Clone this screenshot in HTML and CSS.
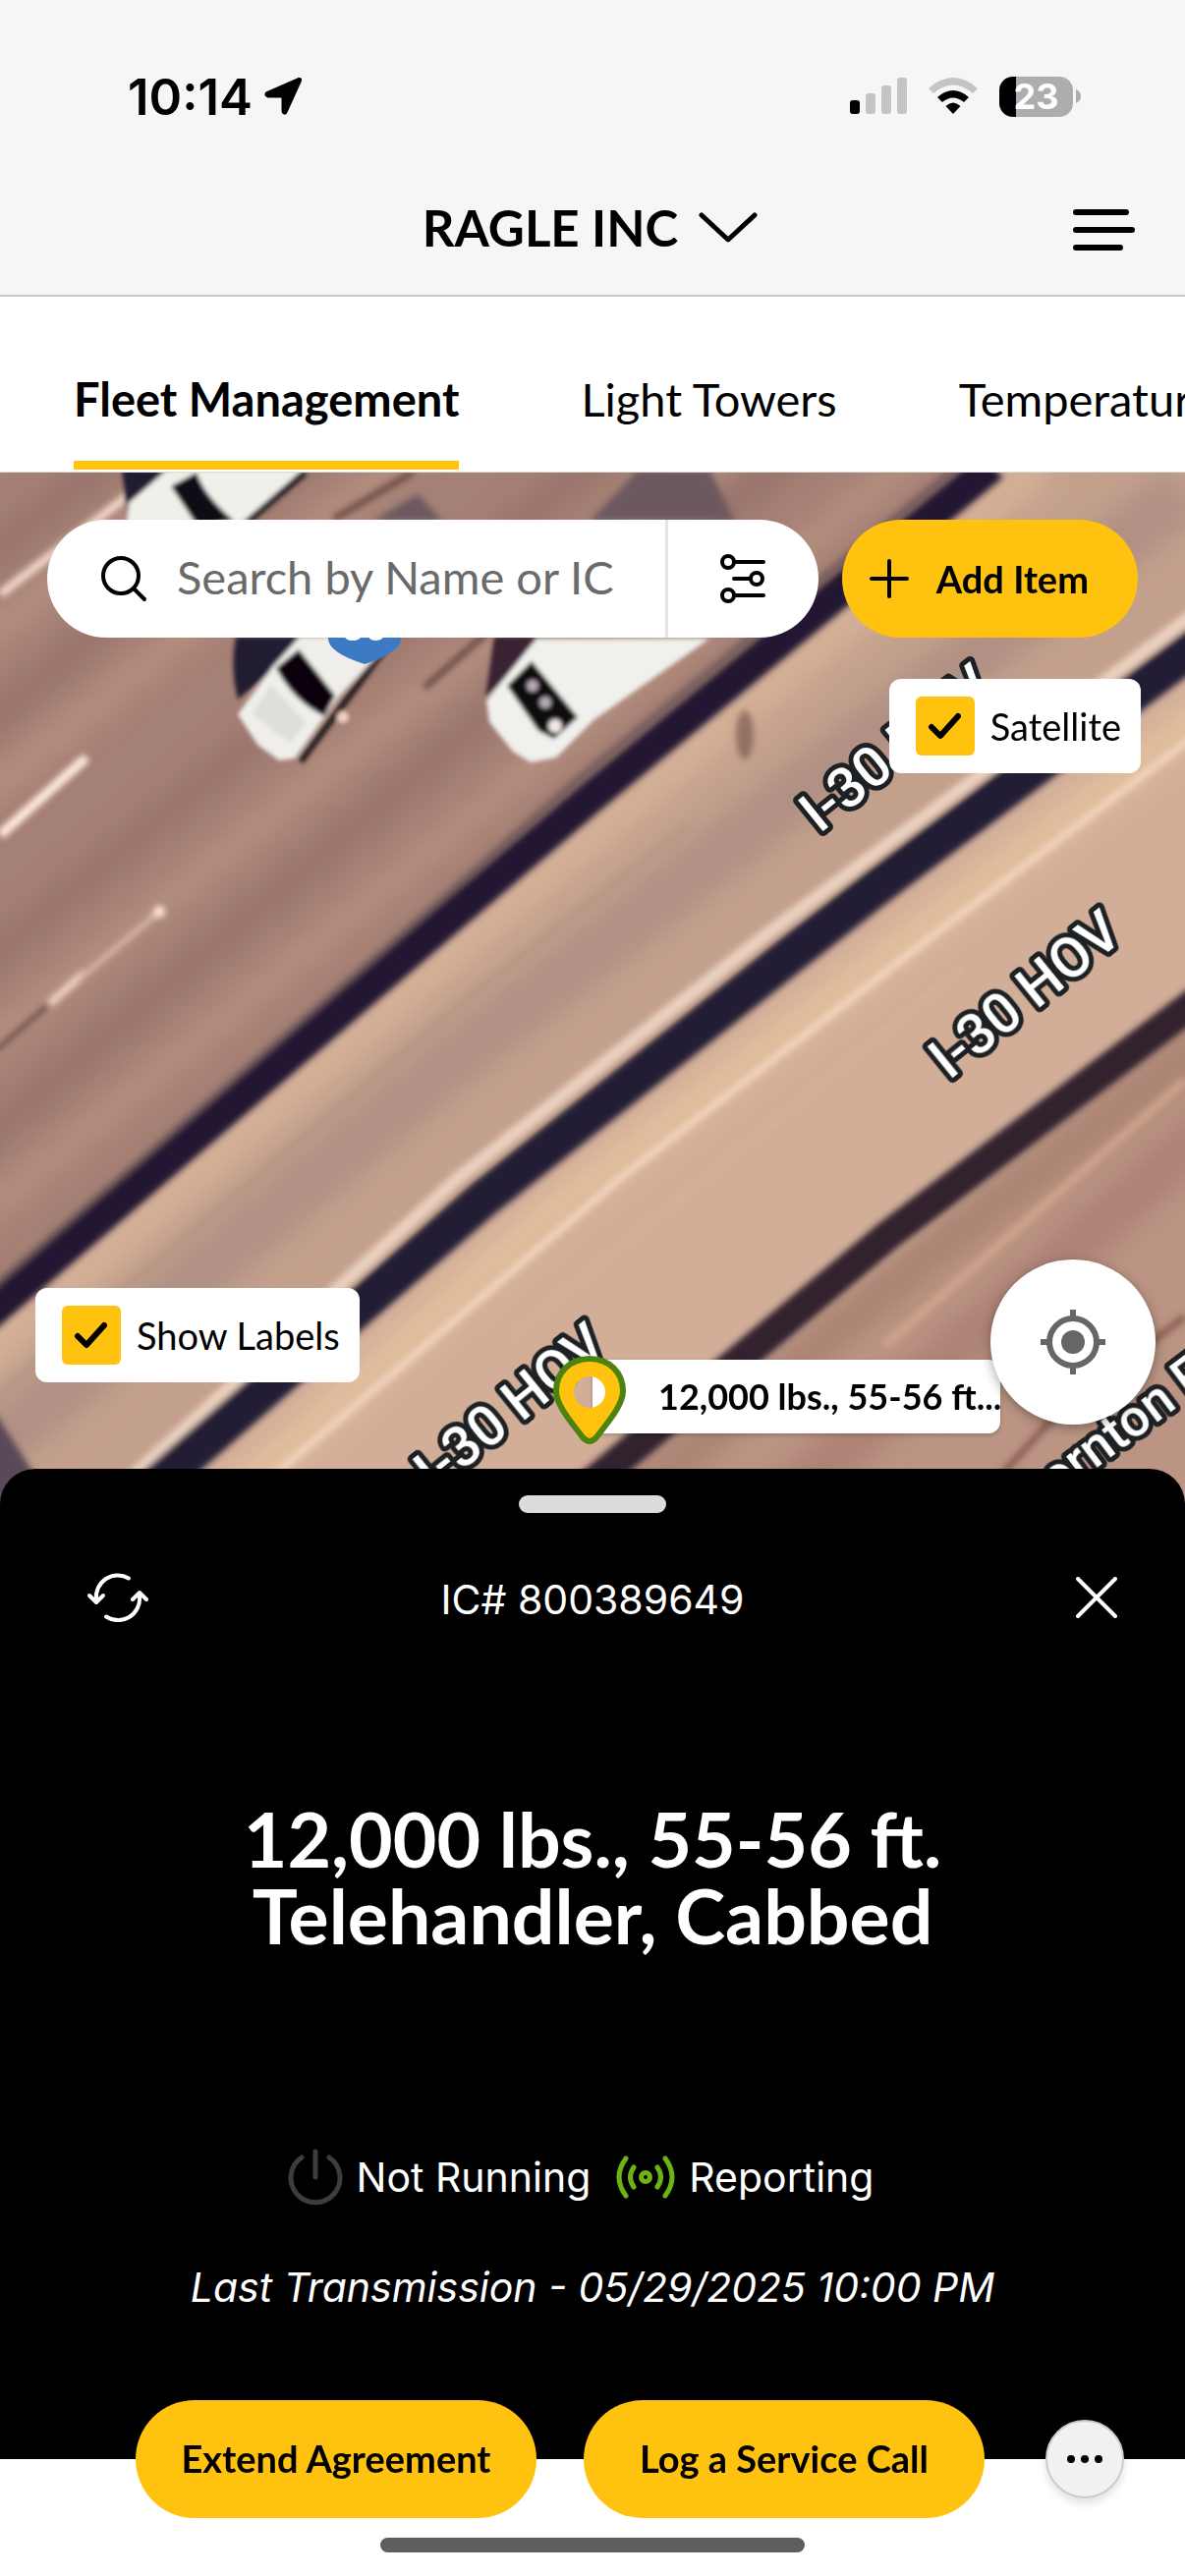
FILE: index.html
```html
<!DOCTYPE html>
<html lang="en">
<head>
<meta charset="utf-8">
<meta name="viewport" content="width=device-width, initial-scale=1">
<title>Fleet Management</title>
<link rel="stylesheet" href="styles.css">
</head>
<body>
<header class="header">
  <div class="status-bar">
    <div class="clock">
      <span>10:14</span>
      <svg width="38" height="38" viewBox="0 0 38 38" aria-hidden="true"><path d="M35 2L3 16Q1.500 18 4 18.500H17Q19.500 18.500 19.500 21V34Q20 36.500 21.500 35L36 3Q36.500 1.500 35 2Z" stroke="#000" stroke-width="4" stroke-linejoin="round"/></svg>
    </div>
    <div class="signals">
      <svg width="58" height="38" viewBox="0 0 58 38" aria-hidden="true"><rect y="23" width="10" height="14" rx="3"/><g fill="#c4c4c4"><rect x="16" y="16" width="10" height="21" rx="3"/><rect x="32" y="8" width="10" height="29" rx="3"/><rect x="48" width="10" height="37" rx="3"/></g></svg>
      <svg width="50" height="38" viewBox="0 0 50 38" aria-hidden="true"><path d="M0 11Q25-11 50 11L45 16Q25-1 5 16Z" fill="#c4c4c4"/><path d="M9 20Q25 6 41 20L36 25Q25 16 14 25Z"/><path d="M17.500 29Q25 22 32.500 29L26 36Q25 37.500 24 36Z"/></svg>
      <div class="battery"><span>23</span><svg width="5" height="14" viewBox="0 0 5 14" aria-hidden="true"><path d="M0 0Q5 2 5 7T0 14Z" fill="#adadad"/></svg></div>
    </div>
  </div>
  <div class="title-row">
    <button class="account" type="button">
      <span>RAGLE INC</span>
      <svg width="62" height="34" viewBox="0 0 62 34" fill="none" stroke="#000" stroke-width="5" stroke-linecap="round" stroke-linejoin="round" aria-hidden="true"><path d="M4 4L31 29L58 4"/></svg>
    </button>
    <button class="menu" type="button" aria-label="Menu">
      <svg width="64" height="42" viewBox="0 0 64 42" stroke="#000" stroke-width="6" stroke-linecap="round" aria-hidden="true"><path d="M3 3H54M3 21H60M3 39H48"/></svg>
    </button>
  </div>
</header>

<nav class="tabs">
  <a class="tab tab-active" href="#fleet">Fleet Management</a>
  <a class="tab" href="#light">Light Towers</a>
  <a class="tab" href="#temperature">Temperature</a>
</nav>

<main class="map">
  <svg class="imagery" viewBox="0 481 1206 1050" preserveAspectRatio="xMidYMin slice" aria-hidden="true">
    <defs>
      <filter id="soft" x="-5%" y="-5%" width="110%" height="110%"><feGaussianBlur stdDeviation="3"/></filter>
      <filter id="slight" x="-5%" y="-5%" width="110%" height="110%"><feGaussianBlur stdDeviation="2"/></filter>
      <filter id="haze" x="-10%" y="-10%" width="120%" height="120%"><feGaussianBlur stdDeviation="14"/></filter>
    </defs>
    <rect y="481" width="1206" height="1050" fill="#a58074"/>
    <!-- road surfaces between the barriers -->
    <g filter="url(#soft)">
      <path d="M-40 1350L1020 460H1260V625L-40 1690Z" fill="#c4a18d"/>
      <path d="M110 1560L1260 630V1000L560 1560Z" fill="#d2ae99"/>
      <path d="M560 1560L1260 1000V1560Z" fill="#bb9483"/>
    </g>
    <g filter="url(#haze)" fill="none">
      <g stroke="#8f6b66" stroke-width="30" opacity=".6">
        <path d="M-40 590L120 460"/><path d="M-40 760L340 440"/><path d="M-40 1000L640 440"/><path d="M-40 1180L470 750L830 440"/>
      </g>
      <g stroke="#c29f8a" stroke-width="22" opacity=".7">
        <path d="M-40 830L430 450"/><path d="M-40 1085L760 440"/><path d="M-40 670L250 440"/><path d="M-40 1255L960 440"/>
      </g>
      <path d="M-40 1500L460 1080L1206 500" stroke="#a98b80" stroke-width="60" opacity=".75"/>
      <path d="M-40 1400L500 935L1060 470" stroke="#dbb79b" stroke-width="34" opacity=".8"/>
      <path d="M230 1530L560 1235L1240 715" stroke="#e4c29d" stroke-width="30"/>
      <path d="M650 1520L930 1290L1240 1050" stroke="#a98272" stroke-width="36"/>
      <path d="M760 1560L1240 1140" stroke="#a67b70" stroke-width="50" opacity=".7"/>
    </g>
    <g filter="url(#soft)" fill="none">
      <path d="M-20 1435L470 1020L700 840" stroke="#a98a7c" stroke-width="4" opacity=".6"/>
      <path d="M520 1360L980 985" stroke="#e0bda6" stroke-width="6" opacity=".3"/>
      <path d="M900 1370L1206 1100" stroke="#d9ab92" stroke-width="9" opacity=".7"/>
      <path d="M1020 1500L1075 1440L1206 1340" stroke="#7d5147" stroke-width="7" opacity=".8"/>
      <path d="M-20 1345L408 977L600 813L1010 474" stroke="#211733" stroke-width="32"/>
      <path d="M-20 1322L390 968L584 797L985 466" stroke="#5d4a52" stroke-width="7" opacity=".7"/>
      <path d="M105 1530L465 1200L780 951L870 884L1230 614" stroke="#ead0bf" stroke-width="13"/>
      <path d="M137 1530L492 1220L808 969L892 903L1230 648" stroke="#231b35" stroke-width="38"/>
      <path d="M590 1520L903 1258L1230 1010" stroke="#33242f" stroke-width="31"/>
      <path d="M240 1535L630 1200L926 970L1230 738" stroke="#f2d3bd" stroke-width="8"/>
      <path d="M0 605L140 497" stroke="#f0d6c8" stroke-width="9"/>
      <path d="M0 850L88 771" stroke="#ffe9dc" stroke-width="10"/>
      <path d="M50 1022L86 990" stroke="#f0d0c0" stroke-width="8"/><path d="M80 997L162 928" stroke="#dfbaa8" stroke-width="5"/><circle cx="162" cy="928" r="6" fill="#ffe9dc"/>
      <path d="M-5 1070L50 1022" stroke="#61423d" stroke-width="4"/>
      <path d="M340 528L420 481M432 700L500 640" stroke="#6f4d44" stroke-width="7"/>
      <path d="M-10 1430L60 1540H-10Z" fill="#5a4a58"/>
      <path d="M380 530L425 503L450 530ZM600 530L650 478H722L748 530Z" fill="#6d5860"/>
      <ellipse cx="758" cy="748" rx="9" ry="25" fill="#866357" opacity=".8"/>
    </g>
    <!-- vehicles -->
    <g filter="url(#slight)">
      <path d="M124 478H172L130 525Z" fill="#221d33"/>
      <path d="M310 481L250 532" stroke="#2a2728" stroke-width="8"/>
      <path d="M129 532L131 512L170 478H308L246 532Z" fill="#f0efea"/>
      <path d="M174 495L200 481Q208 505 238 530L200 534Z" fill="#0b0a14"/>
      <path d="M240 648H305L280 680L242 712Q234 680 240 648Z" fill="#211d32"/>
      <path d="M403 645L306 775" stroke="#2b2220" stroke-width="7"/>
      <path d="M242 727L278 678L305 648H402L346 708L300 772L284 774L262 758Z" fill="#efeeea"/>
      <path d="M256 727L276 697L312 736L295 756Z" fill="#dedfdb"/>
      <path d="M281 680L304 661L341 708L330 729Q298 713 281 680Z" fill="#07060f"/>
      <circle cx="349" cy="730" r="6" fill="#f2d1c6"/>
      <path d="M503 648H560L494 710Z" fill="#3b2433"/>
      <path d="M495 713L546 650H722L604 733L566 771L540 776L522 765L498 735Z" fill="#f0f0ec"/>
      <path d="M516 698L541 673L588 730L564 752L548 744Z" fill="#09080c"/>
      <circle cx="542" cy="698" r="6" fill="#b6a9b4"/><circle cx="555" cy="715" r="6" fill="#b6a9b4"/><circle cx="565" cy="739" r="7" fill="#f1e6e8"/>
    </g>
    <path d="M334 600H408V650Q408 664 371 676Q334 664 334 650Z" fill="#3d7ac6"/>
    <text class="shield-text" x="371" y="652" text-anchor="middle">30</text>
    <g class="road-labels">
      <text transform="translate(834 849) rotate(-39)">I-30 HOV</text>
      <text transform="translate(966 1100) rotate(-39)">I-30 HOV</text>
      <text transform="translate(442 1520) rotate(-39)">I-30 HOV</text>
      <text class="road-name" transform="translate(1026 1562) rotate(-37)">Thornton Fwy</text>
    </g>
  </svg>

  <div class="toolbar">
    <div class="search">
      <label class="search-field">
        <svg width="48" height="50" viewBox="0 0 48 50" fill="none" stroke="#000" stroke-width="4" stroke-linecap="round" aria-hidden="true"><circle cx="21" cy="22" r="18"/><path d="M34 35L45 46"/></svg>
        <input type="search" placeholder="Search by Name or IC" aria-label="Search by Name or IC">
      </label>
      <button class="filter" type="button" aria-label="Filters">
        <svg width="48" height="50" viewBox="0 0 48 50" fill="none" stroke="#000" stroke-width="4" stroke-linecap="round" aria-hidden="true"><circle cx="9" cy="8" r="6"/><path d="M15 8H45"/><circle cx="38" cy="25" r="6"/><path d="M15 25H32"/><circle cx="9" cy="42" r="6"/><path d="M15 42H45"/></svg>
      </button>
    </div>
    <button class="pill add" type="button">
      <svg width="40" height="40" viewBox="0 0 40 40" stroke="#000" stroke-width="4" stroke-linecap="round" aria-hidden="true"><path d="M20 2V38M2 20H38"/></svg>
      <span>Add Item</span>
    </button>
  </div>

  <label class="toggle toggle-satellite">
    <span class="check"><input type="checkbox" checked><svg width="36" height="28" viewBox="0 0 36 28" fill="none" stroke="#000" stroke-width="6" stroke-linecap="round" stroke-linejoin="round" aria-hidden="true"><path d="M4 15L13 24L31 4"/></svg></span>
    Satellite
  </label>
  <label class="toggle toggle-labels">
    <span class="check"><input type="checkbox" checked><svg width="36" height="28" viewBox="0 0 36 28" fill="none" stroke="#000" stroke-width="6" stroke-linecap="round" stroke-linejoin="round" aria-hidden="true"><path d="M4 15L13 24L31 4"/></svg></span>
    Show Labels
  </label>

  <div class="marker-label">12,000 lbs., 55-56 ft...</div>
  <svg class="pin" width="76" height="92" viewBox="0 0 76 92" aria-hidden="true"><path fill-rule="evenodd" d="M38 4C18 4 4 18 4 37C4 51 19 68 31 84Q38 92 45 84C57 68 72 51 72 37C72 18 58 4 38 4ZM38 22A16 16 0 1 1 38 54A16 16 0 1 1 38 22Z" fill="#ffc20e"/><path d="M38 4C18 4 4 18 4 37C4 51 19 68 31 84Q38 92 45 84C57 68 72 51 72 37C72 18 58 4 38 4Z" fill="none" stroke="#4d820c" stroke-width="6"/></svg>
  <button class="locate" type="button" aria-label="My location">
    <svg width="66" height="66" viewBox="0 0 66 66" fill="none" stroke="#666" stroke-width="6" aria-hidden="true"><circle cx="33" cy="33" r="24"/><circle cx="33" cy="33" r="12" fill="#666" stroke="none"/><path d="M33 0V9M33 57V66M0 33H9M57 33H66"/></svg>
  </button>
</main>

<section class="sheet">
  <div class="handle"></div>
  <div class="sheet-head">
    <button class="icon-button refresh" type="button" aria-label="Refresh">
      <svg width="64" height="50" viewBox="0 0 64 50" fill="none" stroke="#fff" stroke-width="4" stroke-linecap="round" stroke-linejoin="round" aria-hidden="true"><path d="M43 5.500A22 22 0 0 0 10 27M3 23L10 30L17 23"/><path d="M20 44.500A22 22 0 0 0 54 24M47 27L54 20L61 27"/></svg>
    </button>
    <p class="unit-id">IC# 800389649</p>
    <button class="icon-button close" type="button" aria-label="Close">
      <svg width="42" height="42" viewBox="0 0 42 42" stroke="#fff" stroke-width="4" stroke-linecap="round" aria-hidden="true"><path d="M2 2L40 40M40 2L2 40"/></svg>
    </button>
  </div>
  <h1 class="unit-name">12,000 lbs., 55-56 ft. Telehandler, Cabbed</h1>
  <div class="unit-status">
    <span class="state">
      <svg width="56" height="60" viewBox="0 0 56 60" fill="none" stroke="#3d3d3d" stroke-width="5" stroke-linecap="round" aria-hidden="true"><path d="M28 4V30M14 10A25 25 0 1 0 42 10"/></svg>
      Not Running
    </span>
    <span class="state">
      <svg width="60" height="44" viewBox="0 0 60 44" fill="none" stroke="#6eb314" stroke-width="5" stroke-linecap="round" aria-hidden="true"><circle cx="30" cy="22" r="4.500"/><path d="M18 12Q11 22 18 32M42 12Q49 22 42 32M10 3Q-4 22 10 41M50 3Q64 22 50 41"/></svg>
      Reporting
    </span>
  </div>
  <p class="transmission"><span>Last Transmission -</span> <span>05/29/2025 10:00 PM</span></p>
</section>

<footer class="footer">
  <div class="actions">
    <button class="pill" type="button">Extend Agreement</button>
    <button class="pill" type="button">Log a Service Call</button>
    <button class="more" type="button" aria-label="More actions">
      <svg width="36" height="8" viewBox="0 0 36 8" aria-hidden="true"><circle cx="4" cy="4" r="4"/><circle cx="18" cy="4" r="4"/><circle cx="32" cy="4" r="4"/></svg>
    </button>
  </div>
  <div class="home-indicator"></div>
</footer>
</body>
</html>
```
FILE: styles.css
```css
* { box-sizing: border-box; }

body {
  margin: 0;
  min-height: 100vh;
  display: flex;
  flex-direction: column;
  overflow-x: hidden;
  background: #fff;
  color: #000;
  font-family: Lato, "Liberation Sans", sans-serif;
}

svg { display: block; flex: none; }
p, h1 { margin: 0; }

button {
  margin: 0;
  padding: 0;
  border: 0;
  background: none;
  color: inherit;
  font: inherit;
  cursor: pointer;
}

.header {
  padding-top: 66px;
  border-bottom: 2px solid #c8c8c8;
  background: #f6f6f6;
}

.status-bar {
  display: flex;
  justify-content: space-between;
  align-items: center;
  height: 64px;
  padding: 0 106px 0 130px;
  font-family: Inter, "Liberation Sans", sans-serif;
}

.clock {
  display: flex;
  align-items: center;
  gap: 12px;
  font-size: 51px;
  font-weight: 600;
}

.signals { display: flex; align-items: center; gap: 22px; }

.battery { display: flex; align-items: center; gap: 3px; }

.battery span {
  width: 75px;
  border-radius: 14px;
  background: linear-gradient(90deg, #000 17px, #adadad 17px);
  color: #fff;
  font-size: 36px;
  font-weight: 700;
  line-height: 41px;
  text-align: center;
}

.title-row {
  display: grid;
  grid-template-columns: 1fr auto 1fr;
  align-items: center;
  height: 170px;
  padding: 38px 50px 0;
  align-content: center;
}

.account {
  grid-column: 2;
  display: flex;
  align-items: center;
  gap: 20px;
  padding: 0 4px 4px 0;
  font-size: 51px;
  font-weight: 700;
  line-height: 60px;
}

.menu { justify-self: end; }

.tabs {
  display: flex;
  gap: 124px;
  height: 179px;
  padding: 0 75px;
  border-bottom: 1px solid #ddd;
  overflow: hidden;
}

.tab {
  flex: none;
  padding-top: 74px;
  height: 176px;
  color: #000;
  font-size: 47px;
  line-height: 60px;
  text-decoration: none;
}

.tab-active { border-bottom: 9px solid #ffc20e; font-weight: 700; }

.map {
  position: relative;
  flex: 1 1 auto;
  min-height: 1050px;
  overflow: hidden;
}

.imagery { position: absolute; inset: 0; width: 100%; height: 100%; }

.road-labels {
  fill: #fff;
  stroke: #1d2124;
  stroke-width: 10px;
  stroke-linejoin: round;
  paint-order: stroke;
  font: 500 57px Roboto, sans-serif;
}

.road-name { font-size: 53px; }

.shield-text { fill: #fff; font: 700 40px Roboto, sans-serif; }

.toolbar {
  position: relative;
  display: flex;
  gap: 24px;
  padding: 48px 48px 0;
}

.search {
  flex: 1;
  min-width: 0;
  display: flex;
  height: 120px;
  border-radius: 60px;
  background: #fff;
}

.search-field {
  flex: 1;
  min-width: 0;
  display: flex;
  align-items: center;
  gap: 30px;
  padding-left: 54px;
}

.search-field input {
  flex: 1;
  min-width: 0;
  padding: 0 0 4px;
  border: 0;
  outline: 0;
  background: none;
  font: 47px/60px Lato, "Liberation Sans", sans-serif;
  color: #000;
}

.search-field input::placeholder { color: #6a6a6a; opacity: 1; }

.filter {
  flex: none;
  width: 156px;
  display: grid;
  place-items: center;
  border-left: 3px solid #e6e6e6;
}

.pill {
  height: 120px;
  padding-bottom: 3px;
  border-radius: 60px;
  background: #ffc20e;
  font-size: 38px;
  font-weight: 700;
  white-space: nowrap;
}

.add {
  flex: none;
  display: flex;
  align-items: center;
  gap: 28px;
  padding: 0 50px 0 28px;
}

.toggle {
  position: absolute;
  display: flex;
  align-items: center;
  gap: 16px;
  height: 96px;
  padding: 0 20px 0 27px;
  border-radius: 12px;
  background: #fff;
  font-size: 38px;
}

.toggle-satellite { top: 210px; right: 45px; }
.toggle-labels { left: 36px; bottom: 124px; }

.check { display: grid; place-items: center; }
.check > * { grid-area: 1 / 1; }

.check input {
  appearance: none;
  width: 60px;
  height: 60px;
  margin: 0;
  border-radius: 6px;
  background: #ffc20e;
}

.check svg { pointer-events: none; }

.marker-label {
  position: absolute;
  left: 50%;
  bottom: 72px;
  width: 415px;
  padding-left: 67px;
  border-radius: 0 12px 12px 0;
  background: #fff;
  box-shadow: 0 2px 4px rgba(0, 0, 0, .2);
  font-size: 36px;
  font-weight: 700;
  line-height: 75px;
  white-space: nowrap;
}

.pin { position: absolute; left: calc(50% - 41px); bottom: 60px; }

.locate {
  position: absolute;
  right: 30px;
  bottom: 81px;
  width: 168px;
  height: 168px;
  display: grid;
  place-items: center;
  border-radius: 50%;
  background: #fff;
  box-shadow: 0 3px 12px rgba(0, 0, 0, .35);
}

.sheet {
  position: relative;
  margin-top: -36px;
  padding: 27px 60px 149px;
  border-radius: 36px 36px 0 0;
  background: #000;
  color: #fff;
  font-family: Inter, "Liberation Sans", sans-serif;
  font-size: 41px;
  line-height: 52px;
  text-align: center;
}

.handle {
  width: 150px;
  height: 18px;
  margin: 0 auto;
  border-radius: 9px;
  background: #dcdcdc;
}

.sheet-head {
  display: grid;
  grid-template-columns: 1fr auto 1fr;
  align-items: center;
  padding-top: 58px;
}

.icon-button { display: grid; place-items: center; height: 52px; }
.refresh { justify-self: start; margin-left: 28px; }
.close { justify-self: end; margin-right: 9px; }
.unit-id { padding-top: 4px; }

.unit-name {
  width: 760px;
  max-width: 100%;
  margin: 178px auto 0;
  font-family: Lato, "Liberation Sans", sans-serif;
  font-size: 77px;
  font-weight: 700;
  line-height: 78px;
}

.unit-status {
  display: flex;
  justify-content: center;
  gap: 26px;
  margin-top: 198px;
  padding-right: 24px;
}

.state { display: flex; align-items: center; gap: 14px; }

.transmission { margin-top: 56px; font-style: italic; }

.footer { padding-bottom: 24px; }

.actions {
  position: relative;
  display: flex;
  align-items: center;
  gap: 48px;
  margin-top: -60px;
  padding: 0 62px 0 138px;
}

.actions .pill { flex: 1; }

.more {
  width: 80px;
  height: 80px;
  margin-left: 14px;
  display: grid;
  place-items: center;
  border: 2px solid #ccc;
  border-radius: 50%;
  background: #f1f1f1;
  box-shadow: 0 5px 8px rgba(0, 0, 0, .12);
}

.home-indicator {
  width: 432px;
  height: 15px;
  margin: 20px auto 0;
  border-radius: 8px;
  background: #5e5e5e;
}
```
